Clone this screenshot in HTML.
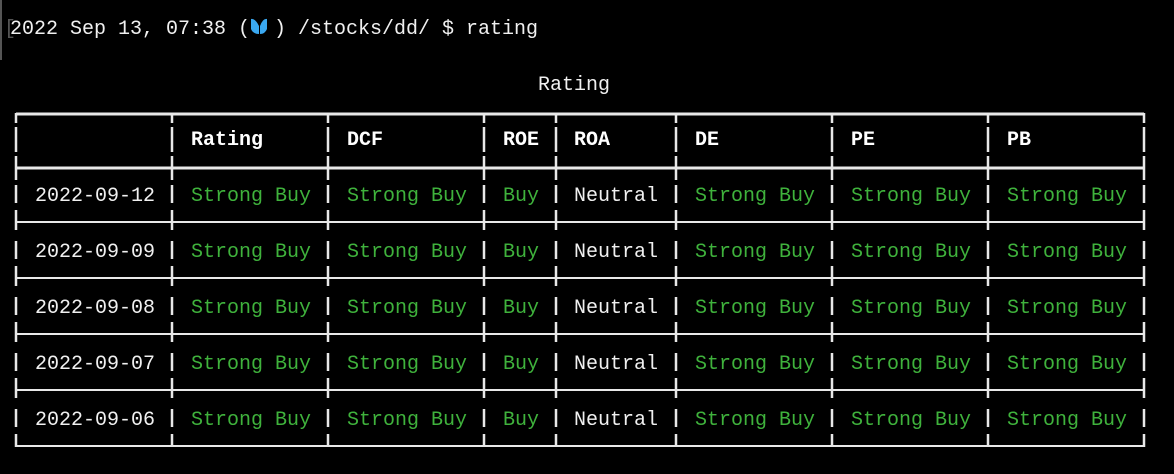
<!DOCTYPE html>
<html><head><meta charset="utf-8"><style>
html,body{margin:0;padding:0;background:#000;width:1174px;height:474px;overflow:hidden}
svg{display:block}
text{font-family:"Liberation Mono","DejaVu Sans Mono",monospace;font-size:20px}
.w{fill:#f0f0f0}.g{fill:#3fb23c}.b{font-weight:bold;fill:#fff}
</style></head><body>
<svg width="1174" height="474" xmlns="http://www.w3.org/2000/svg">
<rect x="0" y="0" width="2" height="60" fill="#555"/>
<text x="4" y="34" fill="#555">[</text>
<text x="10" y="34" class="w">2022 Sep 13, 07:38 (</text>
<g transform="translate(250,17)">
<path d="M1 2 Q5 1 9 9 L9 17 Q3 17 1 12 Z" fill="#3aa8f0"/>
<path d="M17 2 Q13 1 10 9 L10 17 Q15 17 17 12 Z" fill="#3aa8f0"/>
</g>
<text x="274" y="34" class="w">) /stocks/dd/ $ rating</text>
<text x="538" y="90" class="w">Rating</text>
<g stroke="#e8e8e8" fill="none">
<line x1="16" y1="114" x2="1144" y2="114" stroke-width="3"/>
<line x1="16" y1="168" x2="1144" y2="168" stroke-width="3"/>
<line x1="16" y1="222" x2="1144" y2="222" stroke-width="2"/>
<line x1="16" y1="278" x2="1144" y2="278" stroke-width="2"/>
<line x1="16" y1="334" x2="1144" y2="334" stroke-width="2"/>
<line x1="16" y1="390" x2="1144" y2="390" stroke-width="2"/>
<line x1="16" y1="446" x2="1144" y2="446" stroke-width="2"/>
</g>
<g stroke="#e8e8e8" stroke-width="2.5" id="v">
<path d="M16 113V123M16 127V152M16 156V180M16 185V203M16 210V230M16 241V259M16 266V286M16 297V315M16 322V342M16 353V371M16 378V398M16 409V427M16 434V447"/>
<path transform="translate(156,0)" d="M16 113V123M16 127V152M16 156V180M16 185V203M16 210V230M16 241V259M16 266V286M16 297V315M16 322V342M16 353V371M16 378V398M16 409V427M16 434V447"/>
<path transform="translate(312,0)" d="M16 113V123M16 127V152M16 156V180M16 185V203M16 210V230M16 241V259M16 266V286M16 297V315M16 322V342M16 353V371M16 378V398M16 409V427M16 434V447"/>
<path transform="translate(468,0)" d="M16 113V123M16 127V152M16 156V180M16 185V203M16 210V230M16 241V259M16 266V286M16 297V315M16 322V342M16 353V371M16 378V398M16 409V427M16 434V447"/>
<path transform="translate(540,0)" d="M16 113V123M16 127V152M16 156V180M16 185V203M16 210V230M16 241V259M16 266V286M16 297V315M16 322V342M16 353V371M16 378V398M16 409V427M16 434V447"/>
<path transform="translate(660,0)" d="M16 113V123M16 127V152M16 156V180M16 185V203M16 210V230M16 241V259M16 266V286M16 297V315M16 322V342M16 353V371M16 378V398M16 409V427M16 434V447"/>
<path transform="translate(816,0)" d="M16 113V123M16 127V152M16 156V180M16 185V203M16 210V230M16 241V259M16 266V286M16 297V315M16 322V342M16 353V371M16 378V398M16 409V427M16 434V447"/>
<path transform="translate(972,0)" d="M16 113V123M16 127V152M16 156V180M16 185V203M16 210V230M16 241V259M16 266V286M16 297V315M16 322V342M16 353V371M16 378V398M16 409V427M16 434V447"/>
<path transform="translate(1128,0)" d="M16 113V123M16 127V152M16 156V180M16 185V203M16 210V230M16 241V259M16 266V286M16 297V315M16 322V342M16 353V371M16 378V398M16 409V427M16 434V447"/>
</g>
<g class="b">
<text x="191" y="145" class="b">Rating</text>
<text x="347" y="145" class="b">DCF</text>
<text x="503" y="145" class="b">ROE</text>
<text x="574" y="145" class="b">ROA</text>
<text x="695" y="145" class="b">DE</text>
<text x="851" y="145" class="b">PE</text>
<text x="1007" y="145" class="b">PB</text>
</g>
<g id="r1">
<text x="35" y="201" class="w">2022-09-12</text>
<text x="191" y="201" class="g">Strong Buy</text><text x="347" y="201" class="g">Strong Buy</text>
<text x="503" y="201" class="g">Buy</text><text x="574" y="201" class="w">Neutral</text>
<text x="695" y="201" class="g">Strong Buy</text><text x="851" y="201" class="g">Strong Buy</text><text x="1007" y="201" class="g">Strong Buy</text>
</g>
<g transform="translate(0,56)">
<text x="35" y="201" class="w">2022-09-09</text>
<text x="191" y="201" class="g">Strong Buy</text><text x="347" y="201" class="g">Strong Buy</text>
<text x="503" y="201" class="g">Buy</text><text x="574" y="201" class="w">Neutral</text>
<text x="695" y="201" class="g">Strong Buy</text><text x="851" y="201" class="g">Strong Buy</text><text x="1007" y="201" class="g">Strong Buy</text>
</g>
<g transform="translate(0,112)">
<text x="35" y="201" class="w">2022-09-08</text>
<text x="191" y="201" class="g">Strong Buy</text><text x="347" y="201" class="g">Strong Buy</text>
<text x="503" y="201" class="g">Buy</text><text x="574" y="201" class="w">Neutral</text>
<text x="695" y="201" class="g">Strong Buy</text><text x="851" y="201" class="g">Strong Buy</text><text x="1007" y="201" class="g">Strong Buy</text>
</g>
<g transform="translate(0,168)">
<text x="35" y="201" class="w">2022-09-07</text>
<text x="191" y="201" class="g">Strong Buy</text><text x="347" y="201" class="g">Strong Buy</text>
<text x="503" y="201" class="g">Buy</text><text x="574" y="201" class="w">Neutral</text>
<text x="695" y="201" class="g">Strong Buy</text><text x="851" y="201" class="g">Strong Buy</text><text x="1007" y="201" class="g">Strong Buy</text>
</g>
<g transform="translate(0,224)">
<text x="35" y="201" class="w">2022-09-06</text>
<text x="191" y="201" class="g">Strong Buy</text><text x="347" y="201" class="g">Strong Buy</text>
<text x="503" y="201" class="g">Buy</text><text x="574" y="201" class="w">Neutral</text>
<text x="695" y="201" class="g">Strong Buy</text><text x="851" y="201" class="g">Strong Buy</text><text x="1007" y="201" class="g">Strong Buy</text>
</g>
</svg>
</body></html>
